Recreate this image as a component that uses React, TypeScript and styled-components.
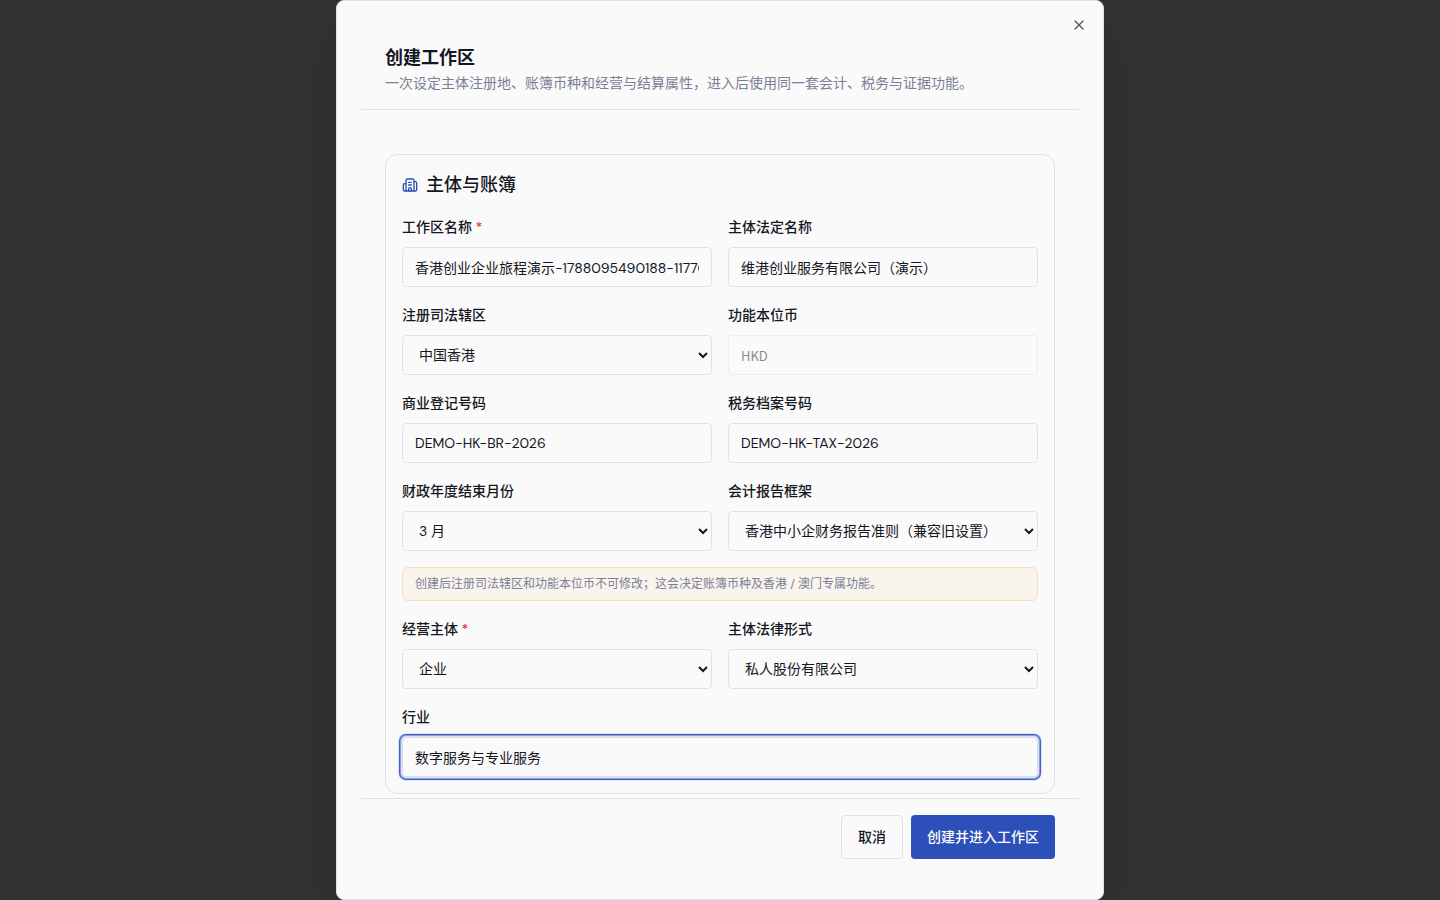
import React from "react";
import styled, { createGlobalStyle, css } from "styled-components";
import { Building2, X } from "lucide-react";

const GlobalStyle = createGlobalStyle`
  *, *::before, *::after { box-sizing: border-box; }
  body {
    margin: 0;
    background: #323232;
    color: #14171f;
    font-family: "DM Sans", Inter, "Noto Sans CJK SC", sans-serif;
    font-size: 14px;
    line-height: 20px;
  }
  button, input, select { font: inherit; color: inherit; }
`;

const Overlay = styled.div`
  display: flex;
  justify-content: center;
  min-height: 100vh;
`;

const Dialog = styled.form`
  position: relative;
  display: flex;
  flex-direction: column;
  width: 100%;
  max-width: 768px;
  padding: 24px;
  background: #fafafa;
  border: 1px solid #e1e2e8;
  border-radius: 8px;
  box-shadow: 0 24px 48px -12px rgba(0, 0, 0, 0.25);
`;

const CloseButton = styled.button`
  position: absolute;
  top: 16px;
  right: 16px;
  display: flex;
  padding: 0;
  border: 0;
  background: none;
  color: #14171f;
  opacity: 0.7;
  cursor: pointer;
`;

const Header = styled.header`
  display: flex;
  flex-direction: column;
  gap: 6px;
  padding: 24px 24px 16px;
  border-bottom: 1px solid #e1e2e8;
`;

const Title = styled.h1`
  margin: 0;
  font-size: 18px;
  line-height: 18px;
  font-weight: 600;
`;

const Description = styled.p`
  margin: 0;
  color: #7a8194;
`;

const Body = styled.div`
  flex: 1;
  padding: 44px 24px 4px;
`;

const Section = styled.section`
  display: flex;
  flex-direction: column;
  gap: 16px;
  padding: 16px;
  border: 1px solid #e1e2e8;
  border-radius: 12px;
`;

const SectionTitle = styled.h2`
  display: flex;
  align-items: center;
  gap: 8px;
  margin: 0;
  font-size: 18px;
  line-height: 28px;
  font-weight: 500;

  svg { color: #2c4fb9; }
`;

const FieldGrid = styled.div`
  display: grid;
  grid-template-columns: repeat(2, minmax(0, 1fr));
  gap: 16px;
`;

const FieldBox = styled.div<{ $wide?: boolean }>`
  display: flex;
  flex-direction: column;
  gap: 8px;
  grid-column: ${({ $wide }) => ($wide ? "1 / -1" : "auto")};
`;

const Label = styled.label`
  line-height: 24px;
  font-weight: 500;
`;

const Required = styled.span`
  color: #dc2c3c;
`;

const control = css`
  width: 100%;
  height: 40px;
  padding: 8px 12px;
  background: #fafafa;
  border: 1px solid #e1e2e8;
  border-radius: 4px;
`;

const Input = styled.input`
  ${control}

  &:focus {
    outline: none;
    border-color: #dcdfea;
    box-shadow: 0 0 0 1px #dce1f1, 0 0 0 2px #8b9fd9, 0 0 0 3px #3f60c4, 0 0 0 4px #dde3f4;
  }

  &:disabled {
    opacity: 0.5;
    font-family: "Noto Sans CJK SC", sans-serif;
    font-size: 13px;
  }
`;

const Select = styled.select`
  ${control}
`;

const Notice = styled.p`
  grid-column: 1 / -1;
  margin: 0;
  padding: 8px 12px;
  border: 1px solid #f8dfae;
  border-radius: 6px;
  background: #f9f4ee;
  color: #7a8194;
  font-size: 12px;
  line-height: 16px;
`;

const Footer = styled.footer`
  display: flex;
  justify-content: flex-end;
  gap: 8px;
  padding: 16px 24px;
  border-top: 1px solid #e1e2e8;
`;

const Button = styled.button<{ $primary?: boolean }>`
  height: 44px;
  padding: 0 16px;
  border: ${({ $primary }) => ($primary ? "0" : "1px solid #e1e2e8")};
  border-radius: 4px;
  background: ${({ $primary }) => ($primary ? "#2c4fb9" : "#fafafa")};
  color: ${({ $primary }) => ($primary ? "#fafafa" : "#14171f")};
  font-weight: 500;
  cursor: pointer;
`;

type FieldProps = {
  id: string;
  label: string;
  required?: boolean;
  wide?: boolean;
  children: React.ReactNode;
};

function Field({ id, label, required, wide, children }: FieldProps) {
  return (
    <FieldBox $wide={wide}>
      <Label htmlFor={id}>
        {label}
        {required && <Required> *</Required>}
      </Label>
      {children}
    </FieldBox>
  );
}

export default function App() {
  return (
    <>
      <GlobalStyle />
      <Overlay>
        <Dialog role="dialog" aria-labelledby="title" onSubmit={(e) => e.preventDefault()}>
          <Header>
            <Title id="title">创建工作区</Title>
            <Description>
              一次设定主体注册地、账簿币种和经营与结算属性，进入后使用同一套会计、税务与证据功能。
            </Description>
          </Header>
          <Body>
            <Section>
              <SectionTitle>
                <Building2 size={16} />
                主体与账簿
              </SectionTitle>
              <FieldGrid>
                <Field id="name" label="工作区名称" required>
                  <Input id="name" defaultValue="香港创业企业旅程演示-1788095490188-11770" />
                </Field>
                <Field id="legal-name" label="主体法定名称">
                  <Input id="legal-name" defaultValue="维港创业服务有限公司（演示）" />
                </Field>
                <Field id="region" label="注册司法辖区">
                  <Select id="region">
                    <option>中国香港</option>
                  </Select>
                </Field>
                <Field id="currency" label="功能本位币">
                  <Input id="currency" defaultValue="HKD" disabled />
                </Field>
                <Field id="registration" label="商业登记号码">
                  <Input id="registration" defaultValue="DEMO-HK-BR-2026" />
                </Field>
                <Field id="tax" label="税务档案号码">
                  <Input id="tax" defaultValue="DEMO-HK-TAX-2026" />
                </Field>
                <Field id="year-end" label="财政年度结束月份">
                  <Select id="year-end">
                    <option>3 月</option>
                  </Select>
                </Field>
                <Field id="framework" label="会计报告框架">
                  <Select id="framework">
                    <option>香港中小企财务报告准则（兼容旧设置）</option>
                  </Select>
                </Field>
                <Notice>
                  创建后注册司法辖区和功能本位币不可修改；这会决定账簿币种及香港 / 澳门专属功能。
                </Notice>
                <Field id="entity" label="经营主体" required>
                  <Select id="entity">
                    <option>企业</option>
                  </Select>
                </Field>
                <Field id="legal-form" label="主体法律形式">
                  <Select id="legal-form">
                    <option>私人股份有限公司</option>
                  </Select>
                </Field>
                <Field id="industry" label="行业" wide>
                  <Input id="industry" defaultValue="数字服务与专业服务" autoFocus />
                </Field>
              </FieldGrid>
            </Section>
          </Body>
          <Footer>
            <Button type="button">取消</Button>
            <Button type="submit" $primary>创建并进入工作区</Button>
          </Footer>
          <CloseButton type="button" aria-label="关闭">
            <X size={16} />
          </CloseButton>
        </Dialog>
      </Overlay>
    </>
  );
}
